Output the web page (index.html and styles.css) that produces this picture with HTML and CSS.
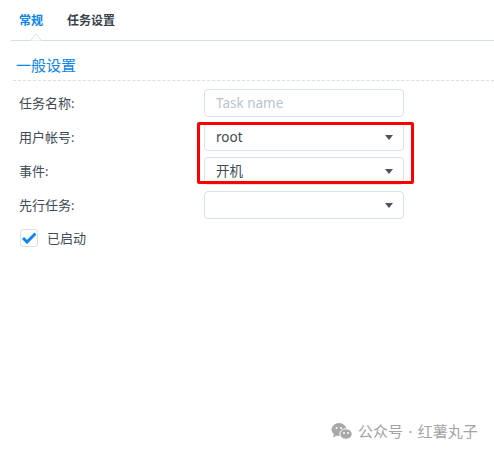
FILE: index.html
```html
<!DOCTYPE html>
<html lang="zh">
<head>
<meta charset="utf-8">
<title>任务设置</title>
<link rel="stylesheet" href="styles.css">
</head>
<body>
<div class="page">
  <nav class="tabs">
    <span class="tab active">常规</span>
    <span class="tab">任务设置</span>
    <svg class="notch" width="14" height="9" viewBox="0 0 14 9"><path d="M0 8.500h1.500L7 2l5.500 6.500H14" fill="#fff" stroke="#d5e0ea"/></svg>
  </nav>
  <h2 class="section">一般设置</h2>
  <form class="form">
    <div class="row"><label class="label">任务名称:</label><div class="field placeholder">Task name</div></div>
    <div class="row"><label class="label">用户帐号:</label><div class="field">root<i class="caret"></i></div></div>
    <div class="row"><label class="label">事件:</label><div class="field">开机<i class="caret"></i></div></div>
    <div class="row"><label class="label">先行任务:</label><div class="field"><i class="caret"></i></div></div>
    <div class="check">
      <span class="box"><svg width="14" height="12" viewBox="0 0 14 12"><path d="M1 6l4 4 8.500-8.500" fill="none" stroke="#0a84f0" stroke-width="3"/></svg></span>
      <span class="check-text">已启动</span>
    </div>
  </form>
  <div class="highlight"></div>
  <div class="mark">
    <svg width="22" height="19" viewBox="0 0 22 18"><ellipse cx="8" cy="7" rx="7.500" ry="6.500" fill="#a8a8a8"/><path d="M3 11l-1 4 4-2z" fill="#a8a8a8"/><ellipse cx="15" cy="11.500" rx="6.200" ry="5.200" fill="#a8a8a8" stroke="#fff"/><circle cx="13" cy="10.500" r="1" fill="#fff"/><circle cx="17" cy="10.500" r="1" fill="#fff"/><circle cx="5.500" cy="5.500" r="1" fill="#fff"/><circle cx="10" cy="5.500" r="1" fill="#fff"/></svg>
    <span class="mark-text">公众号 · 红薯丸子</span>
  </div>
</div>
</body>
</html>
```
FILE: styles.css
```css
* { box-sizing: border-box; }
html, body { margin: 0; padding: 0; background: #fff; }
body {
  font-family: "Noto Sans", "Noto Sans CJK SC", sans-serif;
  font-size: 13px;
  color: #414b55;
}
.page { position: relative; width: 494px; height: 452px; overflow: hidden; padding-left: 11px; }
.tabs {
  position: relative;
  display: flex;
  gap: 24px;
  height: 41px;
  padding: 12px 0 0 8px;
  border-bottom: 1px solid #d5e0ea;
  font-weight: 700;
  font-size: 12px;
  line-height: 18px;
}
.tab { color: #38424c; }
.tab.active { color: #0a84f0; }
.notch { position: absolute; left: 18px; bottom: -1px; }
.section {
  margin: 0 0 0 2px;
  height: 40px;
  padding: 14px 0 0 3px;
  border-bottom: 1px dashed #d5e0ea;
  font-weight: 400;
  font-size: 15px;
  line-height: 20px;
  color: #0a84f0;
}
.form { display: flex; flex-direction: column; gap: 6px; padding: 8px 0 0 8px; }
.row { display: flex; align-items: center; height: 28px; }
.label { width: 185px; font-size: 13px; padding-bottom: 2px; }
.field {
  position: relative;
  width: 200px;
  height: 28px;
  padding-left: 11px;
  border: 1px solid #d7e1ea;
  border-radius: 4px;
  line-height: 27px;
  font-size: 13.500px;
  color: #414b55;
}
.placeholder { color: #b9c3cc; }
.caret {
  position: absolute;
  right: 10px;
  top: 11px;
  border-left: 4.500px solid transparent;
  border-right: 4.500px solid transparent;
  border-top: 5px solid #4a5560;
}
.check { display: flex; align-items: center; gap: 9px; height: 28px; margin-left: 1px; margin-top: -1px; font-size: 13px; }
.check-text { padding-bottom: 1px; }
.box {
  display: flex;
  align-items: center;
  justify-content: center;
  width: 18px;
  height: 18px;
  border: 1px solid #d7e1ea;
  border-radius: 3px;
}
.highlight {
  position: absolute;
  left: 197px;
  top: 122px;
  width: 217px;
  height: 62px;
  border: 3px solid #ff0000;
  border-radius: 2px;
}
.mark {
  position: absolute;
  left: 331px;
  top: 421px;
  display: flex;
  align-items: center;
  gap: 5px;
  color: #a3a3a3;
  font-size: 15px;
  line-height: 20px;
  white-space: nowrap;
}
.mark-text { word-spacing: 1.500px; }
```
